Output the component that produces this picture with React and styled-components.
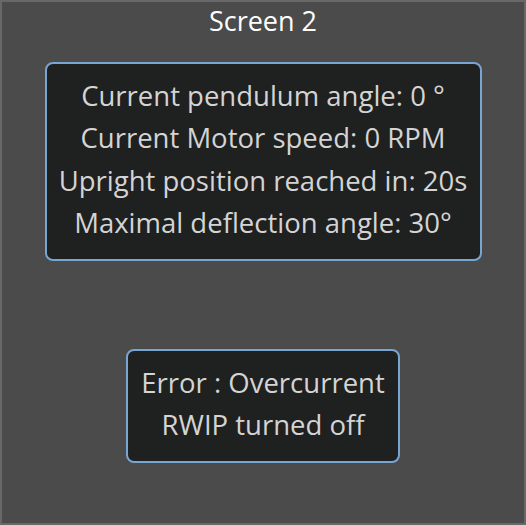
import React from "react";
import styled, { createGlobalStyle } from "styled-components";

const Global = createGlobalStyle`
  html, body { margin: 0; padding: 0; background: #4a4b4a; }
  #root { width: 526px; height: 525px; }
`;

const Screen = styled.div`
  box-sizing: border-box;
  width: 526px;
  height: 525px;
  background: #4a4b4a;
  border: 2px solid #67686a;
  display: flex;
  flex-direction: column;
  align-items: center;
  font-family: "Open Sans", "Noto Sans", sans-serif;
`;

const Title = styled.h1`
  margin: 2px 0 0;
  font-size: 27px;
  font-weight: 400;
  line-height: 34px;
  color: #ffffff;
`;

const Panel = styled.div`
  box-sizing: border-box;
  margin-top: ${(p) => p.$gap}px;
  width: ${(p) => p.$w}px;
  height: ${(p) => p.$h}px;
  padding-bottom: 4px;
  background: #1f2020;
  border: 2px solid #79a5d2;
  border-radius: 8px;
  display: flex;
  flex-direction: column;
  justify-content: center;
  align-items: center;
`;

const Line = styled.div`
  font-size: 27.5px;
  line-height: 42.5px;
  color: #d4d4d4;
  white-space: nowrap;
`;

export default function App() {
  return (
    <>
      <Global />
      <Screen>
        <Title>Screen 2</Title>
        <Panel $gap={24} $w={437} $h={199}>
          <Line>Current pendulum angle: 0 °</Line>
          <Line>Current Motor speed: 0 RPM</Line>
          <Line>Upright position reached in: 20s</Line>
          <Line>Maximal deflection angle: 30°</Line>
        </Panel>
        <Panel $gap={88} $w={274} $h={114}>
          <Line>Error : Overcurrent</Line>
          <Line>RWIP turned off</Line>
        </Panel>
      </Screen>
    </>
  );
}
